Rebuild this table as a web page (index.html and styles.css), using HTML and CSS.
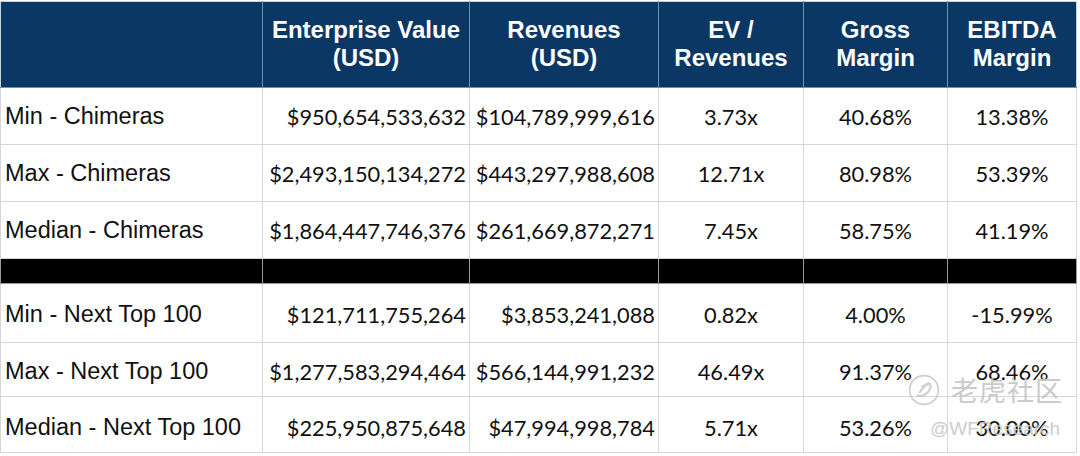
FILE: index.html
```html
<!DOCTYPE html>
<html>
<head>
<meta charset="utf-8">
<link rel="stylesheet" href="styles.css">
</head>
<body>
<div class="wrap">
<table class="comps">
  <colgroup>
    <col class="c-label"><col class="c-ev"><col class="c-rev"><col class="c-mult"><col class="c-gm"><col class="c-em">
  </colgroup>
  <thead>
    <tr class="head">
      <th></th>
      <th>Enterprise Value<br>(USD)</th>
      <th>Revenues<br>(USD)</th>
      <th>EV /<br>Revenues</th>
      <th>Gross<br>Margin</th>
      <th>EBITDA<br>Margin</th>
    </tr>
  </thead>
  <tbody>
    <tr class="r1"><td class="label">Min - Chimeras</td><td class="num">$950,654,533,632</td><td class="num">$104,789,999,616</td><td class="mid">3.73x</td><td class="mid">40.68%</td><td class="mid">13.38%</td></tr>
    <tr class="r2"><td class="label">Max - Chimeras</td><td class="num">$2,493,150,134,272</td><td class="num">$443,297,988,608</td><td class="mid">12.71x</td><td class="mid">80.98%</td><td class="mid">53.39%</td></tr>
    <tr class="r3"><td class="label">Median - Chimeras</td><td class="num">$1,864,447,746,376</td><td class="num">$261,669,872,271</td><td class="mid">7.45x</td><td class="mid">58.75%</td><td class="mid">41.19%</td></tr>
    <tr class="sep"><td></td><td></td><td></td><td></td><td></td><td></td></tr>
    <tr class="r5"><td class="label">Min - Next Top 100</td><td class="num">$121,711,755,264</td><td class="num">$3,853,241,088</td><td class="mid">0.82x</td><td class="mid">4.00%</td><td class="mid">-15.99%</td></tr>
    <tr class="r6"><td class="label">Max - Next Top 100</td><td class="num">$1,277,583,294,464</td><td class="num">$566,144,991,232</td><td class="mid">46.49x</td><td class="mid">91.37%</td><td class="mid">68.46%</td></tr>
    <tr class="r7"><td class="label">Median - Next Top 100</td><td class="num">$225,950,875,648</td><td class="num">$47,994,998,784</td><td class="mid">5.71x</td><td class="mid">53.26%</td><td class="mid">30.00%</td></tr>
  </tbody>
</table>
<div class="watermark">
  <div class="wm-top">
    <svg class="wm-icon" width="32" height="32" viewBox="0 0 30 30">
      <circle cx="15" cy="15" r="13.5" fill="none" stroke="#c8c8c8" stroke-width="1.5"/>
      <path d="M9 20 C12 22 19 19 21 13 C22 10 20 8 18 9 C15 11 13 15 11 17" fill="none" stroke="#c8c8c8" stroke-width="1.8" stroke-linecap="round"/>
      <path d="M13 12 C15 10 18 9 19 11" fill="none" stroke="#c8c8c8" stroke-width="1.4" stroke-linecap="round"/>
    </svg>
    <span class="wm-cn">老虎社区</span>
  </div>
  <div class="wm-handle">@WFResearch</div>
</div>
</div>
</body>
</html>
```
FILE: styles.css
```css
html, body {
  margin: 0;
  padding: 0;
  background: #ffffff;
}
.wrap {
  position: relative;
  width: 1080px;
  height: 456px;
  padding-top: 1px;
  box-sizing: border-box;
}
.comps {
  border-collapse: collapse;
  table-layout: fixed;
  width: 1076px;
}
.c-label { width: 262px; }
.c-ev { width: 207px; }
.c-rev { width: 189px; }
.c-mult { width: 145px; }
.c-gm { width: 144px; }
.c-em { width: 129px; }

.comps th, .comps td {
  border: 1px solid #d6d6d6;
  padding: 0;
  overflow: hidden;
  white-space: nowrap;
}
.head th {
  background: #0b3765;
  color: #ffffff;
  font-family: "Liberation Sans", Arial, sans-serif;
  font-weight: bold;
  font-size: 24px;
  line-height: 28px;
  height: 83px;
  text-align: center;
  vertical-align: middle;
  border-color: #6f8fb4;
  border-top-color: #c9d3de;
  padding-bottom: 2px;
}
.head th:first-child { border-left-color: #c9d3de; }
.head th:last-child { border-right-color: #c9d3de; }

.comps td {
  height: 56px;
  vertical-align: middle;
  color: #111111;
}
.r5 td { height: 56px; padding-top: 2px; }
.r6 td { height: 50px; padding-top: 3px; }
.r7 td { height: 50px; padding-top: 5px; }
.label {
  font-family: "Liberation Sans", Arial, sans-serif;
  font-size: 23.5px;
  padding-left: 4px !important;
  text-align: left;
}
.num, .mid {
  font-family: Lato, "Open Sans", sans-serif;
  font-size: 21.8px;
}
.num {
  text-align: right;
  padding-right: 3px !important;
}
.mid { text-align: center; }
.sep td {
  background: #000000;
  height: 24px;
  border-color: #9a9a9a;
}

.watermark {
  position: absolute;
  left: 908px;
  top: 374px;
  color: #c4c4c4;
  font-family: "Liberation Sans", Arial, sans-serif;
  opacity: 0.9;
}
.wm-top {
  display: flex;
  align-items: center;
  gap: 11px;
}
.wm-cn {
  font-family: "Noto Sans CJK SC", sans-serif;
  font-size: 27px;
  line-height: 32px;
  letter-spacing: 1px;
  color: #c6c6c6;
}
.wm-handle {
  margin-top: 12px;
  margin-left: 22px;
  font-size: 19px;
  color: #c8c8c8;
}
```
